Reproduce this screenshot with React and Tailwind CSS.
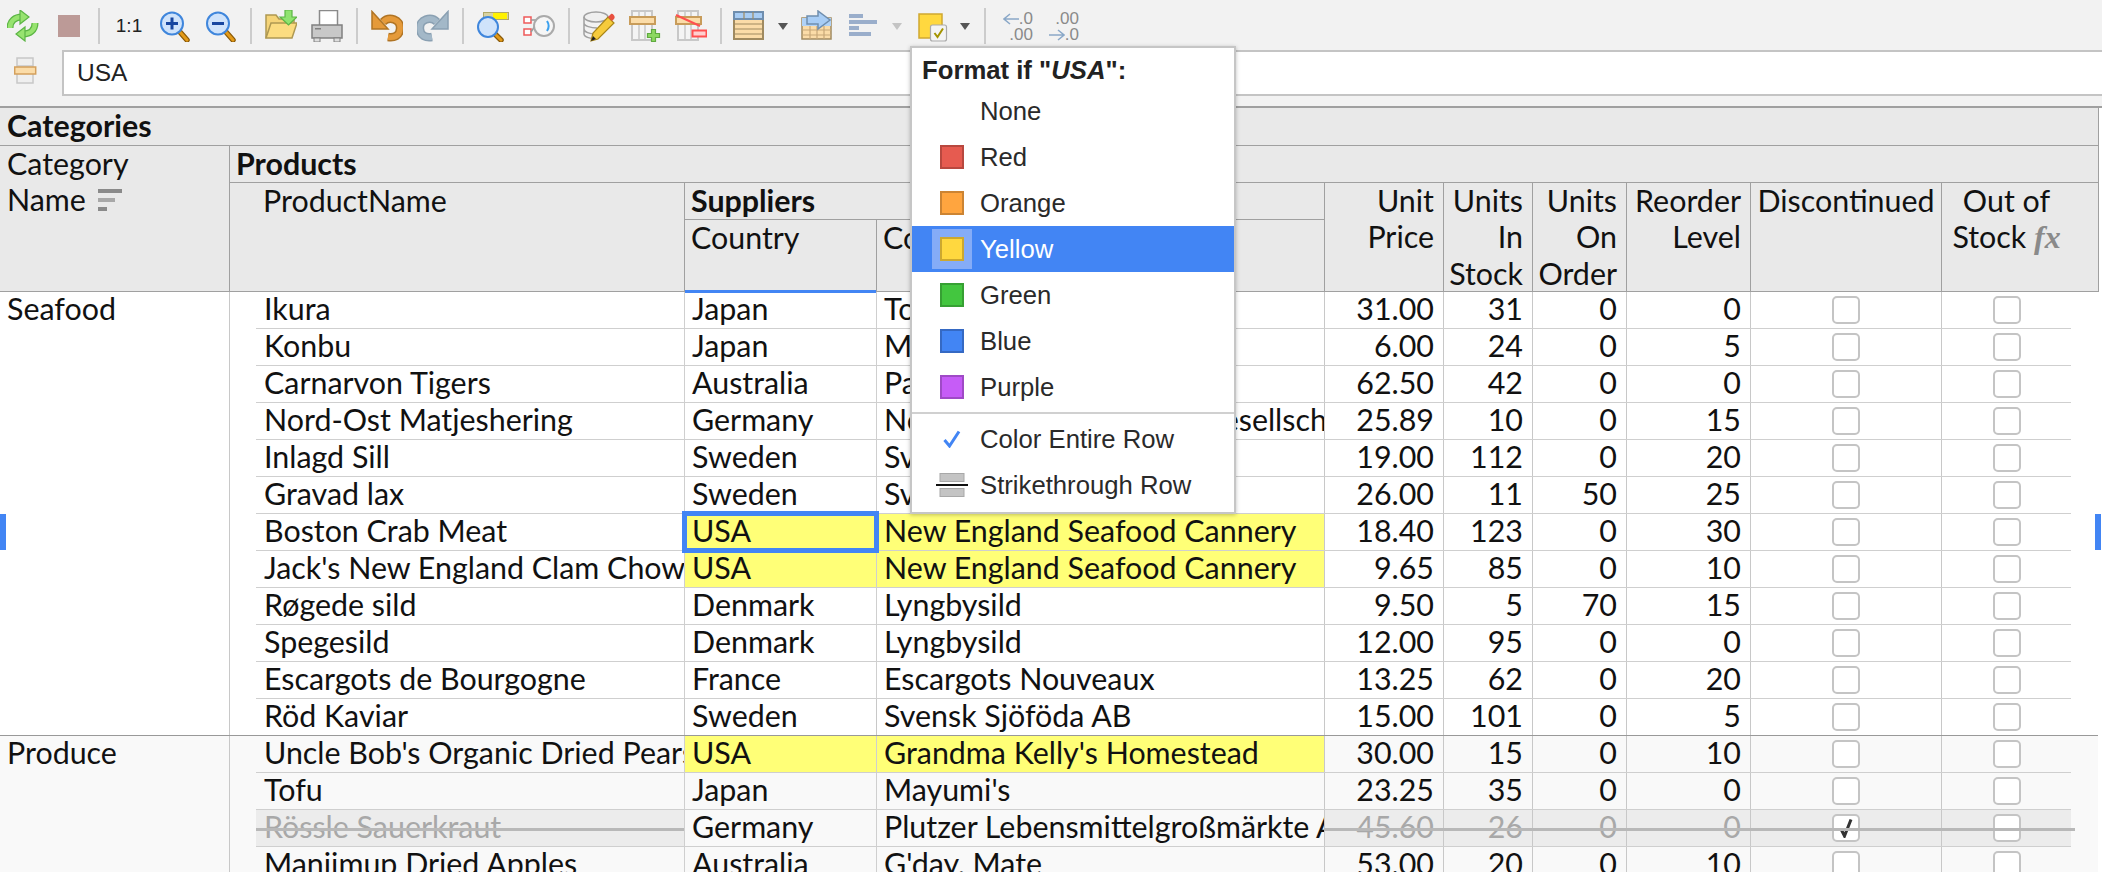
import React from 'react';

// ---------------------------------------------------------------------------
// Data
// ---------------------------------------------------------------------------

const SEAFOOD = [
  ['Ikura', 'Japan', 'Tokyo Traders', '31.00', '31', '0', '0'],
  ['Konbu', 'Japan', "Mayumi's", '6.00', '24', '0', '5'],
  ['Carnarvon Tigers', 'Australia', 'Pavlova, Ltd.', '62.50', '42', '0', '0'],
  ['Nord-Ost Matjeshering', 'Germany', 'Nord-Ost-Fisch Handelsgesellschaft mbH', '25.89', '10', '0', '15'],
  ['Inlagd Sill', 'Sweden', 'Svensk Sjöföda AB', '19.00', '112', '0', '20'],
  ['Gravad lax', 'Sweden', 'Svensk Sjöföda AB', '26.00', '11', '50', '25'],
  ['Boston Crab Meat', 'USA', 'New England Seafood Cannery', '18.40', '123', '0', '30', { hit: true, selected: true }],
  ["Jack's New England Clam Chowder", 'USA', 'New England Seafood Cannery', '9.65', '85', '0', '10', { hit: true }],
  ['Røgede sild', 'Denmark', 'Lyngbysild', '9.50', '5', '70', '15'],
  ['Spegesild', 'Denmark', 'Lyngbysild', '12.00', '95', '0', '0'],
  ['Escargots de Bourgogne', 'France', 'Escargots Nouveaux', '13.25', '62', '0', '20'],
  ['Röd Kaviar', 'Sweden', 'Svensk Sjöföda AB', '15.00', '101', '0', '5'],
];

const PRODUCE = [
  ["Uncle Bob's Organic Dried Pears", 'USA', "Grandma Kelly's Homestead", '30.00', '15', '0', '10', { hit: true }],
  ['Tofu', 'Japan', "Mayumi's", '23.25', '35', '0', '0'],
  ['Rössle Sauerkraut', 'Germany', 'Plutzer Lebensmittelgroßmärkte AG', '45.60', '26', '0', '0', { struck: true }],
  ['Manjimup Dried Apples', 'Australia', "G'day, Mate", '53.00', '20', '0', '10'],
];

const MENU_COLORS = [
  { name: 'Red', box: 'bg-[#e65b50] border-[#b8483f]' },
  { name: 'Orange', box: 'bg-[#ffa53f] border-[#cc8433]' },
  { name: 'Yellow', box: 'bg-[#ffd83f] border-[#cca82f]', active: true },
  { name: 'Green', box: 'bg-[#43c63f] border-[#36a033]' },
  { name: 'Blue', box: 'bg-[#4285f4] border-[#3569c3]' },
  { name: 'Purple', box: 'bg-[#c65cf7] border-[#9f4ac6]' },
];

// ---------------------------------------------------------------------------
// Toolbar icons (32 x 32)
// ---------------------------------------------------------------------------

const Icon = ({ children }) => (
  <svg width="32" height="32" viewBox="0 0 32 32" className="block">
    {children}
  </svg>
);

const Refresh = () => (
  <Icon>
    <path d="M3 18 C3 11 8 7 15 7" fill="none" stroke="#5cb545" strokeWidth="7" />
    <path d="M3 18 C3 11 8 7 15 7" fill="none" stroke="#97e36f" strokeWidth="4.5" />
    <path d="M13 0 L22 7 L13 14 Z" fill="#97e36f" stroke="#5cb545" strokeWidth="1.2" />
    <path d="M28 13 C28 20 23 24 16 24" fill="none" stroke="#5cb545" strokeWidth="7" />
    <path d="M28 13 C28 20 23 24 16 24" fill="none" stroke="#97e36f" strokeWidth="4.5" />
    <path d="M18 17 L9 24 L18 31 Z" fill="#97e36f" stroke="#5cb545" strokeWidth="1.2" />
  </Icon>
);

const Zoom = ({ plus }) => (
  <Icon>
    <path d="M21 22 L28 30" stroke="#8a5a08" strokeWidth="5.5" strokeLinecap="round" />
    <path d="M21 22 L28 30" stroke="#e39a18" strokeWidth="3" strokeLinecap="round" />
    <circle cx="13" cy="13.5" r="11" fill="#cfe3fb" stroke="#3f86dc" strokeWidth="2" />
    <rect x="7" y="12" width="12" height="3" fill="#1746a0" />
    {plus && <rect x="11.5" y="7.5" width="3" height="12" fill="#1746a0" />}
  </Icon>
);

const Folder = () => (
  <Icon>
    <path d="M1 28 V5 H11 L14 9 H29 V14 H7 Z" fill="#f5d478" stroke="#ae9852" strokeWidth="1.5" />
    <path d="M1 28 L6 13 H32 L27 28 Z" fill="#fbdc80" stroke="#ae9852" strokeWidth="1.5" />
    <path d="M20 0 H27 V7 H32 L23.500 15 L15 7 H20 Z" fill="#8fe36f" stroke="#5cb545" strokeWidth="1.2" />
  </Icon>
);

const Printer = () => (
  <Icon>
    <rect x="8.500" y="0.500" width="18" height="16" fill="#fff" stroke="#8a8a8a" strokeWidth="1.500" />
    <rect x="1" y="15" width="30" height="13" fill="#c8c8c8" stroke="#808080" strokeWidth="1.500" />
    <rect x="4" y="18" width="6" height="1.500" fill="#808080" />
    <rect x="3" y="28" width="6" height="4" fill="#ddd" stroke="#808080" />
    <rect x="23" y="28" width="6" height="4" fill="#ddd" stroke="#808080" />
  </Icon>
);

const Undo = ({ flip, fill, line }) => (
  <Icon>
    <g transform={flip ? 'matrix(-1 0 0 1 32 0)' : undefined}>
      <path d="M12 12 C18 6 30 9 29 19 C28.500 26 23 28 17 27" fill="none" stroke={line} strokeWidth="8.500" />
      <path d="M12 12 C18 6 30 9 29 19 C28.500 26 23 28 17 27" fill="none" stroke={fill} strokeWidth="5.500" />
      <path d="M1 1.500 L17 19 H1 Z" fill={fill} stroke={line} strokeWidth="1.500" />
    </g>
  </Icon>
);

const Find = () => (
  <Icon>
    <rect x="6.500" y="2.500" width="25" height="7" fill="#d8d2a0" stroke="#b0a868" />
    <rect x="16" y="3" width="14" height="6" fill="#fff200" />
    <path d="M18 24 L24 30" stroke="#8a5a08" strokeWidth="5.500" strokeLinecap="round" />
    <path d="M18 24 L24 30" stroke="#e39a18" strokeWidth="3" strokeLinecap="round" />
    <circle cx="11" cy="17" r="10" fill="#cfe3fb" stroke="#3f86dc" strokeWidth="2" />
  </Icon>
);

const Relations = () => (
  <Icon>
    <rect x="1" y="7" width="7" height="6" fill="#fff" stroke="#ee5a5a" strokeWidth="1.500" />
    <rect x="1" y="19" width="7" height="6" fill="#fff" stroke="#ee5a5a" strokeWidth="1.500" />
    <path d="M8 10 H14 L12 16 L8 22 M12 16 H18" fill="none" stroke="#999" strokeWidth="1.500" />
    <circle cx="21" cy="16" r="10" fill="#f6f6f6" stroke="#aaa" strokeWidth="2" />
    <path d="M24 11 C26 14 26 18 24 21" fill="none" stroke="#3aa0ee" strokeWidth="2" />
  </Icon>
);

const DbPencil = () => (
  <Icon>
    <ellipse cx="13" cy="7" rx="12" ry="5" fill="#efefef" stroke="#a0a0a0" strokeWidth="1.500" />
    <path d="M1 7 V24 C1 27 8 29 14 29 M1 13 C1 16 8 18 14 18 M1 19 C1 22 7 24 12 24" fill="none" stroke="#a0a0a0" strokeWidth="1.500" />
    <path d="M8 31 L10 23 L25 7 L31 13 L15 29 Z" fill="#f6cb3c" stroke="#a88518" strokeWidth="1.200" />
    <path d="M25 7 L28 4 C30 3 33 7 31 9 L29 11 Z" fill="#e85040" />
    <path d="M8 31 L10 26 L13 29 Z" fill="#222" />
  </Icon>
);

const ColumnAdd = () => (
  <Icon>
    <rect x="3" y="1" width="20" height="29" fill="#f4f4f4" stroke="#c8c8c8" strokeWidth="2" />
    <path d="M10 1 V30 M16 1 V30" stroke="#c8c8c8" strokeWidth="1.500" />
    <rect x="1" y="7" width="25" height="7" fill="#fbdca8" stroke="#c89c5a" strokeWidth="2" />
    <path d="M22.500 19.500 h4 v4 h4 v4 h-4 v4 h-4 v-4 h-4 v-4 h4 Z" fill="#8cd860" stroke="#60aa40" strokeWidth="1.200" />
  </Icon>
);

const ColumnRemove = () => (
  <Icon>
    <rect x="3" y="1" width="20" height="29" fill="#f4f4f4" stroke="#c8c8c8" strokeWidth="2" />
    <path d="M10 1 V30 M16 1 V30" stroke="#c8c8c8" strokeWidth="1.500" />
    <rect x="1" y="7" width="25" height="7" fill="#fbdca8" stroke="#c89c5a" strokeWidth="2" />
    <path d="M1 5 L25 16" stroke="#ff5050" strokeWidth="2" />
    <rect x="17.500" y="20.500" width="14" height="6" fill="#ffd0d0" stroke="#ff5050" strokeWidth="2" />
  </Icon>
);

const TableFormat = () => (
  <Icon>
    <rect x="1" y="2" width="29" height="27" fill="#fbdca8" stroke="#a08a60" strokeWidth="2" />
    <rect x="1" y="2" width="29" height="7" fill="#a8cdf5" stroke="#6f8eae" strokeWidth="2" />
    <path d="M1 14 H30 M1 19 H30 M1 24 H30 M11 2 V9 M20 2 V9" stroke="#a08a60" strokeWidth="1.200" />
  </Icon>
);

const TableMove = () => (
  <Icon>
    <rect x="1" y="8" width="29" height="21" fill="#fbdca8" stroke="#a08a60" strokeWidth="1.500" />
    <path d="M1 20 H30 M1 25 H30 M9 16 V29 M16 16 V29 M23 16 V29" stroke="#c8a878" strokeWidth="1.200" />
    <rect x="1" y="8" width="29" height="8" fill="#b0d2f6" />
    <path d="M6 6 H17 V1 L29 10 L17 19 V14 H6 Z" fill="#a8cdf5" stroke="#6f8eae" strokeWidth="1.500" />
  </Icon>
);

const AlignBars = () => (
  <Icon>
    <g fill="#9aaecb">
      <rect x="2" y="4" width="14" height="4" />
      <rect x="2" y="10" width="28" height="4" />
      <rect x="2" y="16" width="10" height="4" />
      <rect x="2" y="22" width="22" height="4" />
    </g>
  </Icon>
);

const FormatIcon = () => (
  <Icon>
    <rect x="3" y="4" width="23" height="24" fill="#ffd83f" stroke="#d0a830" strokeWidth="1.500" />
    <rect x="14.500" y="15" width="16" height="16" rx="2" fill="#f4f4f4" stroke="#aaa" strokeWidth="1.200" />
    <path d="M18.500 23 L21.500 27 L27 18.500" fill="none" stroke="#a49400" strokeWidth="2" />
  </Icon>
);

const Caret = ({ light }) => (
  <svg width="10" height="7" viewBox="0 0 10 7" className="block">
    <path d="M0 0 H10 L5 7 Z" fill={light ? '#c4c4c4' : '#555555'} />
  </svg>
);

const DecimalArrow = ({ left }) => (
  <svg width="16" height="12" viewBox="0 0 16 12" className="block">
    <path d={left ? 'M16 6 H1 M7 1 L1 6 L7 11' : 'M0 6 H15 M9 1 L15 6 L9 11'} fill="none" stroke="#8aa8c8" strokeWidth="1.500" />
  </svg>
);

const Slot = ({ w = 'w-[46px]', children }) => (
  <div className={`${w} shrink-0 flex items-center justify-center`}>{children}</div>
);

const Sep = () => (
  <div className="w-[14px] shrink-0 flex justify-center">
    <div className="w-[2px] h-[36px] bg-[#cccccc]" />
  </div>
);

const Toolbar = () => (
  <div className="h-[50px] pt-[2px] flex items-center">
    <Slot><Refresh /></Slot>
    <Slot><div className="w-[22px] h-[22px] bg-[#bc9a97]" /></Slot>
    <Sep />
    <Slot><span className="text-[19px] text-[#222] font-['Liberation_Sans',sans-serif]">1:1</span></Slot>
    <Slot><Zoom plus /></Slot>
    <Slot><Zoom /></Slot>
    <Sep />
    <Slot><Folder /></Slot>
    <Slot><Printer /></Slot>
    <Sep />
    <Slot><Undo fill="#e59a3a" line="#b07424" /></Slot>
    <Slot><Undo flip fill="#a3b8c8" line="#8aa0b2" /></Slot>
    <Sep />
    <Slot><Find /></Slot>
    <Slot><Relations /></Slot>
    <Sep />
    <Slot><DbPencil /></Slot>
    <Slot><ColumnAdd /></Slot>
    <Slot><ColumnRemove /></Slot>
    <Sep />
    <Slot w="w-[42px]"><TableFormat /></Slot>
    <Slot w="w-[26px]"><Caret /></Slot>
    <Slot w="w-[42px]"><TableMove /></Slot>
    <Slot w="w-[50px]"><AlignBars /></Slot>
    <Slot w="w-[18px]"><Caret light /></Slot>
    <Slot w="w-[52px]"><FormatIcon /></Slot>
    <Slot w="w-[14px]"><Caret /></Slot>
    <div className="w-[6px]" />
    <Sep />
    <div className="w-[44px] ml-[-1px] mt-[2px] flex flex-col items-end text-[17px] leading-[16px] text-[#8a8a8a] font-['Liberation_Sans',sans-serif] pr-[2px]">
      <div className="flex items-center"><DecimalArrow left />.0</div>
      <div>.00</div>
    </div>
    <div className="w-[46px] mt-[2px] flex flex-col items-end text-[17px] leading-[16px] text-[#8a8a8a] font-['Liberation_Sans',sans-serif] pr-[2px]">
      <div>.00</div>
      <div className="flex items-center"><DecimalArrow />.0</div>
    </div>
  </div>
);

const FormulaBar = () => (
  <div className="h-[58px] flex items-start border-b-2 border-[#a0a0a0]">
    <div className="w-[62px] shrink-0 pl-[14px] pt-[7px]">
      <svg width="24" height="27" viewBox="0 0 24 27" className="block">
        <rect x="3" y="1" width="16" height="25" fill="#efefef" stroke="#c8c8c8" strokeWidth="1.500" />
        <path d="M3 9 H19" stroke="#c8c8c8" strokeWidth="1.500" />
        <rect x="0.700" y="10" width="21" height="7" fill="#fbdca8" stroke="#d4a05c" strokeWidth="1.500" />
      </svg>
    </div>
    <div className="flex-1 h-[46px] bg-white border-y-2 border-l-2 border-[#c4c4c4] pl-[13px] flex items-center text-[24.5px] text-[#222] font-['Liberation_Sans',sans-serif]">
      USA
    </div>
  </div>
);

// ---------------------------------------------------------------------------
// Table
// ---------------------------------------------------------------------------

const HeaderCell = ({ className = '', children }) => (
  <div className={`leading-[36.5px] whitespace-nowrap ${className}`}>
    <div className="relative -top-[1.5px]">{children}</div>
  </div>
);

const TableHeader = () => (
  <div className="w-[2099px] bg-[#e9e9e9] border-r border-[#a0a0a0] border-b border-b-[#a0a0a0] text-[#111]">
    <HeaderCell className="h-[38px] pl-[7px] font-bold border-b border-[#a0a0a0]">Categories</HeaderCell>
    <div className="flex h-[145px]">
      <div className="w-[230px] shrink-0 pl-[7px] border-r border-[#a0a0a0]">
        <HeaderCell>Category</HeaderCell>
        <HeaderCell>
          <span className="inline-flex items-center gap-[12px]">
            Name
            <svg width="24" height="22" viewBox="0 0 24 22" className="block mt-[2px]">
              <rect y="0" width="24" height="4" fill="#8a8a8a" />
              <rect y="9" width="17" height="4" fill="#a8a8a8" />
              <rect y="18" width="9" height="4" fill="#8a8a8a" />
            </svg>
          </span>
        </HeaderCell>
      </div>
      <div className="flex-1 flex flex-col">
        <HeaderCell className="h-[37px] pl-[6px] font-bold border-b border-[#a0a0a0]">Products</HeaderCell>
        <div className="flex flex-1">
          <HeaderCell className="w-[454px] shrink-0 pl-[33px]">ProductName</HeaderCell>
          <div className="w-[640px] shrink-0 flex flex-col border-l border-[#a0a0a0]">
            <HeaderCell className="h-[37px] pl-[6px] font-bold border-b border-[#a0a0a0]">Suppliers</HeaderCell>
            <div className="flex flex-1">
              <div className="relative w-[191px] shrink-0 pl-[6px]">
                <HeaderCell>Country</HeaderCell>
                <div className="absolute left-0 right-0 bottom-0 h-[3px] bg-[#4285f4]" />
              </div>
              <HeaderCell className="flex-1 pl-[6px] border-l border-[#a0a0a0]">CompanyName</HeaderCell>
            </div>
          </div>
          <HeaderCell className="w-[119px] shrink-0 pr-[9px] text-right border-l border-[#a0a0a0]">Unit<br />Price</HeaderCell>
          <HeaderCell className="w-[89px] shrink-0 pr-[9px] text-right border-l border-[#a0a0a0]">Units<br />In<br />Stock</HeaderCell>
          <HeaderCell className="w-[94px] shrink-0 pr-[9px] text-right border-l border-[#a0a0a0]">Units<br />On<br />Order</HeaderCell>
          <HeaderCell className="w-[124px] shrink-0 pr-[9px] text-right border-l border-[#a0a0a0]">Reorder<br />Level</HeaderCell>
          <HeaderCell className="w-[191px] shrink-0 text-center border-l border-[#a0a0a0]">Discontinued</HeaderCell>
          <HeaderCell className="flex-1 pr-[27px] text-center border-l border-[#a0a0a0]">
            Out of<br />Stock{' '}
            <span className="italic font-bold text-[32px] text-[#8a8a8a] font-['Liberation_Serif',serif]">fx</span>
          </HeaderCell>
        </div>
      </div>
    </div>
  </div>
);

const Checkbox = ({ checked }) => (
  <div className="w-[28px] h-[28px] bg-white border-2 border-[#c4c4c4] rounded-[5px] flex items-center justify-center">
    {checked && (
      <svg width="14" height="20" viewBox="0 0 14 20" className="block">
        <path d="M2 11 L5.500 18 L12 1.500" fill="none" stroke="#333" strokeWidth="3" />
      </svg>
    )}
  </div>
);

const Row = ({ data, last }) => {
  const [product, country, company, price, inStock, onOrder, reorder, flags = {}] = data;
  const line = last ? '' : 'border-b border-[#cfcfcf]';
  const strike = flags.struck ? 'bg-[#ececec] text-[#a8a8a8]' : '';
  const hit = flags.hit ? 'bg-[#ffff77]' : '';
  const numeric = 'shrink-0 pr-[9px] text-right border-l border-[#c8c8c8]';

  return (
    <div className={`flex ${last ? 'h-[36px]' : 'h-[37px]'} leading-[33px]`}>
      <div className="w-[26px] shrink-0" />
      <div className={`relative w-[428px] shrink-0 pl-[8px] overflow-x-clip whitespace-nowrap ${line} ${strike}`}>
        {product}
        {flags.struck && <div className="absolute left-0 right-0 top-[18px] h-[3px] bg-[#b8b8b8]" />}
      </div>
      <div className={`relative w-[192px] shrink-0 pl-[7px] border-l border-[#c8c8c8] ${line} ${hit}`}>
        {country}
        {flags.selected && (
          <div className="absolute z-10 -left-[3px] -right-[3px] -top-[3px] -bottom-[3px] border-[5px] border-[#4285f4]" />
        )}
      </div>
      <div className={`w-[448px] shrink-0 pl-[7px] border-l border-[#c8c8c8] overflow-x-clip whitespace-nowrap ${line} ${hit}`}>
        {company}
      </div>
      <div className={`relative flex w-[747px] shrink-0 ${line} ${strike}`}>
        <div className={`w-[119px] ${numeric}`}>{price}</div>
        <div className={`w-[89px] ${numeric}`}>{inStock}</div>
        <div className={`w-[94px] ${numeric}`}>{onOrder}</div>
        <div className={`w-[124px] ${numeric}`}>{reorder}</div>
        <div className="w-[191px] shrink-0 pt-[4px] flex justify-center border-l border-[#c8c8c8]">
          <div><Checkbox checked={flags.struck} /></div>
        </div>
        <div className="flex-1 pt-[4px] flex justify-center border-l border-[#c8c8c8]">
          <div><Checkbox /></div>
        </div>
        {flags.struck && <div className="absolute left-0 -right-[4px] top-[18px] h-[3px] bg-[#b8b8b8]" />}
      </div>
    </div>
  );
};

const Group = ({ name, rows, className = '', closed }) => (
  <div className={`w-[2098px] flex ${closed ? 'border-b border-[#999999]' : ''} ${className}`}>
    <div className="w-[230px] shrink-0 pl-[7px] leading-[33px] border-r border-[#c8c8c8]">{name}</div>
    <div className="flex-1 flex flex-col">
      {rows.map((row, i) => (
        <Row key={row[0]} data={row} last={closed && i === rows.length - 1} />
      ))}
    </div>
  </div>
);

// ---------------------------------------------------------------------------
// Format menu
// ---------------------------------------------------------------------------

const MenuItem = ({ active, icon, label }) => (
  <div className={`h-[46px] flex items-center ${active ? 'bg-[#4285f4] text-white' : 'text-[#2a2a2a]'}`}>
    <div className="w-[80px] -mr-[12px] shrink-0 flex justify-center">{icon}</div>
    <span className="relative">{label}</span>
  </div>
);

const FormatMenu = () => (
  <div className="absolute left-[910px] top-[46px] w-[326px] h-[468px] bg-white border-2 border-[#c6c6c6] shadow-[0_1px_4px_rgba(0,0,0,0.25)] text-[25.7px] font-['Liberation_Sans',sans-serif] z-20">
    <div className="h-[40px] pl-[10px] pt-[5px] flex items-center font-bold text-[#222]">
      Format if "<span className="italic">USA</span>":
    </div>
    <MenuItem label="None" />
    {MENU_COLORS.map((c) => (
      <MenuItem
        key={c.name}
        active={c.active}
        label={c.name}
        icon={
          <div className={c.active ? 'w-[40px] h-[40px] bg-[#85acf7] flex items-center justify-center' : ''}>
            <div className={`w-[24px] h-[24px] border-2 ${c.box}`} />
          </div>
        }
      />
    ))}
    <div className="h-[6px] flex items-center">
      <div className="w-full h-[2px] bg-[#d0d0d0]" />
    </div>
    <MenuItem
      label="Color Entire Row"
      icon={
        <svg width="18" height="18" viewBox="0 0 18 18" className="block">
          <path d="M1.500 10 L6.500 16 L16 1.500" fill="none" stroke="#4285f4" strokeWidth="3" />
        </svg>
      }
    />
    <MenuItem
      label="Strikethrough Row"
      icon={
        <svg width="32" height="24" viewBox="0 0 32 24" className="block">
          <rect x="4" y="0.500" width="24" height="8" fill="#c4c4c4" stroke="#a8a8a8" />
          <rect x="4" y="15.500" width="24" height="8" fill="#c4c4c4" stroke="#a8a8a8" />
          <rect x="0" y="11" width="32" height="2" fill="#111" />
        </svg>
      }
    />
  </div>
);

export default function App() {
  return (
    <div className="relative w-[2102px] h-[872px] overflow-hidden bg-white">
      <div className="bg-[#f2f2f2]">
        <Toolbar />
        <FormulaBar />
      </div>

      <div className="text-[30.4px] text-[#111] font-['Lato',sans-serif]">
        <TableHeader />
        <Group name="Seafood" rows={SEAFOOD} closed />
        <Group name="Produce" rows={PRODUCE} className="bg-[#f9f9f9]" />
      </div>

      {/* Current-row markers on both edges */}
      <div className="absolute left-0 top-[514px] w-[6px] h-[36px] bg-[#4285f4]" />
      <div className="absolute right-[1px] top-[514px] w-[6px] h-[36px] bg-[#4285f4]" />

      <FormatMenu />
    </div>
  );
}
